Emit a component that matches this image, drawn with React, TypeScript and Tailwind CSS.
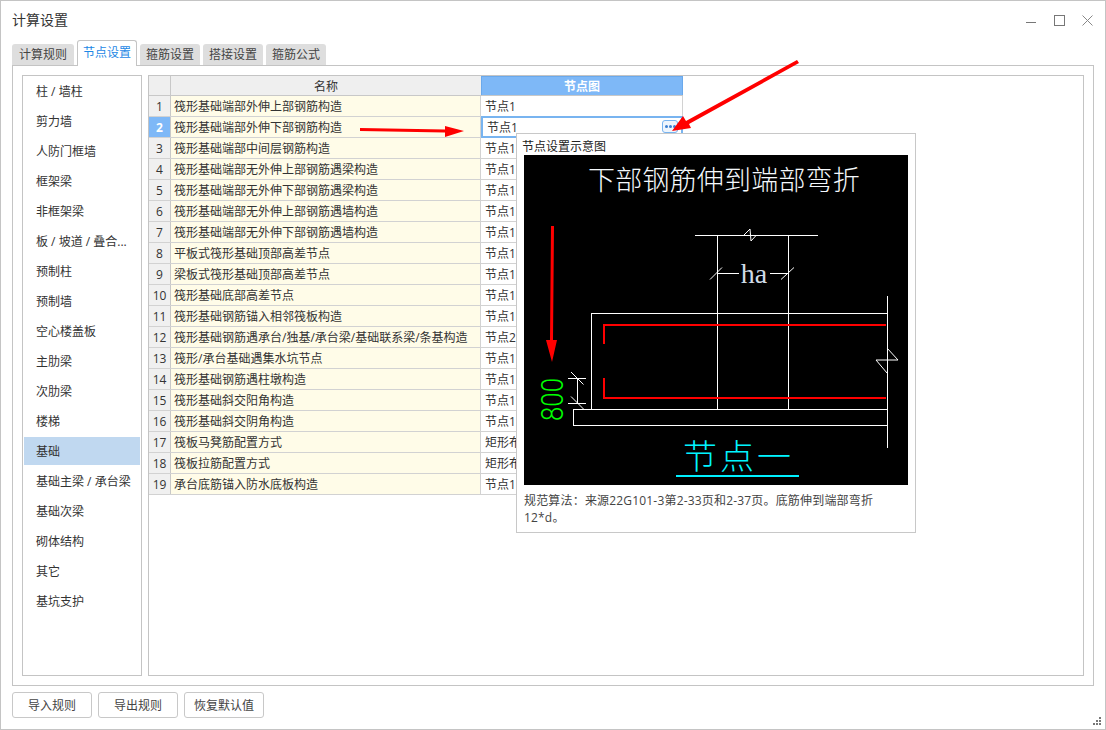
const font = { fontFamily: '"Open Sans", "Noto Sans CJK SC", "Liberation Sans", sans-serif' };

const tabs = ['计算规则', '节点设置', '箍筋设置', '搭接设置', '箍筋公式'];
const side = ['柱 / 墙柱', '剪力墙', '人防门框墙', '框架梁', '非框架梁', '板 / 坡道 / 叠合...', '预制柱', '预制墙', '空心楼盖板', '主肋梁', '次肋梁', '楼梯', '基础', '基础主梁 / 承台梁', '基础次梁', '砌体结构', '其它', '基坑支护'];
const rows: [string, string][] = [
  ['筏形基础端部外伸上部钢筋构造', '节点1'],
  ['筏形基础端部外伸下部钢筋构造', '节点1'],
  ['筏形基础端部中间层钢筋构造', '节点1'],
  ['筏形基础端部无外伸上部钢筋遇梁构造', '节点1'],
  ['筏形基础端部无外伸下部钢筋遇梁构造', '节点1'],
  ['筏形基础端部无外伸上部钢筋遇墙构造', '节点1'],
  ['筏形基础端部无外伸下部钢筋遇墙构造', '节点1'],
  ['平板式筏形基础顶部高差节点', '节点1'],
  ['梁板式筏形基础顶部高差节点', '节点1'],
  ['筏形基础底部高差节点', '节点1'],
  ['筏形基础钢筋锚入相邻筏板构造', '节点1'],
  ['筏形基础钢筋遇承台/独基/承台梁/基础联系梁/条基构造', '节点2'],
  ['筏形/承台基础遇集水坑节点', '节点1'],
  ['筏形基础钢筋遇柱墩构造', '节点1'],
  ['筏形基础斜交阳角构造', '节点1'],
  ['筏形基础斜交阴角构造', '节点1'],
  ['筏板马凳筋配置方式', '矩形布置'],
  ['筏板拉筋配置方式', '矩形布置'],
  ['承台底筋锚入防水底板构造', '节点1'],
];

function Diagram() {
  const w = '#ffffff';
  const r = '#ff0000';
  return (
    <svg width="384" height="330" viewBox="524 155 384 330" className="block bg-black" shapeRendering="crispEdges">
      <text x="724" y="190" textAnchor="middle" fill="#f4f8fc" fontSize="27" fontWeight="300" letterSpacing="0.2" style={{ fontFamily: '"Noto Sans CJK SC", serif' }} shapeRendering="auto">下部钢筋伸到端部弯折</text>
      <g stroke={w} strokeWidth="1" fill="none">
        <path d="M695 235.500H818M717 235V410M788 235V410" />
        <path d="M717 273.500H739M770 273.500H788" />
        <path d="M591.500 410V313.500H887.500M887 296V448M573.500 409.500H887.500M573.500 409V425.500H887.500" />
        <path d="M568 378.500H586M568 403.500H586M577.500 378V404" />
      </g>
      <g stroke={w} strokeWidth="1" fill="none" shapeRendering="auto">
        <path d="M744 235L750 229L751 241L756.500 235" />
        <path d="M710 279.500L722 267.500M781 279.500L794 267.500" />
        <path d="M887 348L898 360H876L887 373" />
        <path d="M571 372L583.500 384.500M571 396.500L583.500 409" />
      </g>
      <path d="M604 344V324.500H886M604 378V397.500H886" stroke={r} strokeWidth="2" fill="none" />
      <text x="0" y="0" transform="translate(563 421) rotate(-90)" fill="#00ff00" fontSize="31" fontWeight="300" style={{ fontFamily: 'Roboto, sans-serif' }} textLength="43" lengthAdjust="spacingAndGlyphs" shapeRendering="auto">800</text>
      <text x="754" y="283" textAnchor="middle" fill="#cfdbe6" fontSize="28" style={{ fontFamily: '"Liberation Serif", serif' }} shapeRendering="auto">ha</text>
      <text x="683" y="469" fill="#00f4ff" fontSize="34" fontWeight="300" style={{ fontFamily: '"Noto Sans CJK SC", serif' }} letterSpacing="3" shapeRendering="auto">节点一</text>
      <rect x="676" y="475" width="123" height="2" fill="#00f0ff" />
    </svg>
  );
}

function Arrows() {
  return (
    <svg className="absolute left-0 top-0 pointer-events-none" width="1106" height="730" viewBox="0 0 1106 730">
      <g fill="#ff0000" stroke="none">
        <path d="M360 128L445 129.500L445 126L464 131L445 137L445 132.500L360 131Z" />
        <path d="M797 60L799 63L689 124L691 128L672 131L683 116L686 121Z" />
        <path d="M551 226H554L553 340H557L552 362L546 340H550Z" />
      </g>
    </svg>
  );
}

export default function App() {
  return (
    <div className="relative w-[1106px] h-[730px] overflow-hidden bg-white border border-[#c4c4c4] text-[12px] text-[#333333] flex flex-col" style={font}>
      <div className="h-[39px] shrink-0 flex items-center justify-between pl-[11px] pr-[12px]">
        <span className="text-[14px] leading-none text-[#333333] -mt-[2px]">计算设置</span>
        <div className="flex items-center gap-[17px] -mt-[1px]">
          <svg width="11" height="11" viewBox="0 0 11 11" stroke="#777777" fill="none"><path d="M0 7.500H10" /></svg>
          <svg width="11" height="11" viewBox="0 0 11 11" stroke="#777777" fill="none"><rect x="0.500" y="0.500" width="10" height="10" /></svg>
          <svg width="11" height="11" viewBox="0 0 11 11" stroke="#888888" fill="none"><path d="M0.500 0.500L10.500 10.500M10.500 0.500L0.500 10.500" /></svg>
        </div>
      </div>

      <div className="h-[25px] shrink-0 flex items-end gap-[3px] pl-[11px] relative z-10">
        {tabs.map((t, i) =>
          i === 1 ? (
            <div key={t} className="h-[26px] w-[60px] -mb-[1px] pb-[2px] flex items-center justify-center bg-white border border-b-0 border-[#c4c4c4] rounded-t-[3px] text-[#1e88e5]">{t}</div>
          ) : (
            <div key={t} className={`h-[21px] ${i === 0 ? 'w-[62px]' : 'w-[60px]'} flex items-center justify-center bg-[#dedede] rounded-t-[3px] text-[#444444]`}>{t}</div>
          ),
        )}
      </div>

      <div className="mx-[11px] h-[621px] shrink-0 border border-[#c4c4c4] p-[9px] flex gap-[6px]">
        <div className="w-[120px] shrink-0 border border-[#c4c4c4] pt-[1px] px-[1px]">
          {side.map((s) => (
            <div key={s} className={`h-[28px] mb-[2px] pt-[2px] flex items-center pl-[12px] whitespace-nowrap ${s === '基础' ? 'bg-[#c0d8f0]' : ''}`}>{s}</div>
          ))}
        </div>
        <div className="flex-1 border border-[#c4c4c4]">
          <div className="flex h-[20px] w-[534px] border-b border-[#c8c8c8]">
            <div className="w-[22px] bg-[#efefef] border-r border-[#c8c8c8]" />
            <div className="w-[310px] bg-[#efefef] pt-[2px] flex items-center justify-center">名称</div>
            <div className="w-[202px] bg-[#7eb8f7] text-white font-bold pt-[1px] flex items-center justify-center border border-b-0 border-[#6aa9ec]">节点图</div>
          </div>
          {rows.map(([name, v], i) => (
            <div key={i} className="flex h-[21px] w-[534px] border-b border-[#d2d2d2]">
              <div className={`w-[22px] shrink-0 border-r border-[#c8c8c8] pt-[2px] flex items-center justify-center ${i === 1 ? 'bg-[#7eb8f7] text-white font-bold' : 'bg-[#f0f0f0]'}`}>{i + 1}</div>
              <div className="w-[310px] shrink-0 bg-[#fffce8] pl-[3px] pt-[2px] flex items-center whitespace-nowrap overflow-hidden border-r border-[#d2d2d2]">{name}</div>
              {i === 1 ? (
                <div className="w-[202px] shrink-0 -mt-[1px] h-[22px] border-2 border-[#78b4f0] flex items-center justify-between pl-[4px] pr-[3px] bg-white relative">
                  <span className="mt-[1px]">{v}</span>
                  <span className="w-[16px] h-[13px] rounded-[3px] border border-[#78b4f0] bg-[#eef5fd] flex items-center justify-center gap-[1px] mb-[1px]">
                    <i className="w-[3px] h-[3px] bg-[#3c7fd0] rounded-full" />
                    <i className="w-[3px] h-[3px] bg-[#3c7fd0] rounded-full" />
                    <i className="w-[3px] h-[3px] bg-[#3c7fd0] rounded-full" />
                  </span>
                </div>
              ) : (
                <div className="w-[202px] shrink-0 pl-[4px] pt-[2px] flex items-center whitespace-nowrap border-r border-[#d2d2d2]">{v}</div>
              )}
            </div>
          ))}
        </div>
      </div>

      <div className="flex gap-[6px] pl-[11px] pt-[6px]">
        {['导入规则', '导出规则', '恢复默认值'].map((b) => (
          <div key={b} className="h-[26px] w-[80px] border border-[#c8c8c8] rounded-[3px] pt-[2px] flex items-center justify-center text-[#444444]">{b}</div>
        ))}
      </div>

      <svg className="absolute right-[3px] bottom-[3px]" width="9" height="9" viewBox="0 0 9 9" fill="#777777">
        <rect x="6" y="0" width="2" height="2" /><rect x="3" y="3" width="2" height="2" /><rect x="6" y="3" width="2" height="2" />
        <rect x="0" y="6" width="2" height="2" /><rect x="3" y="6" width="2" height="2" /><rect x="6" y="6" width="2" height="2" />
      </svg>

      <div className="absolute left-[515px] top-[132px] w-[400px] h-[400px] bg-white border border-[#c8c8c8]">
        <div className="h-[21px] pl-[5px] pt-[4px] flex items-center text-[#222222] text-[12px]">节点设置示意图</div>
        <div className="ml-[7px]"><Diagram /></div>
        <div className="pl-[7px] pt-[7px] w-[372px] text-[12px] leading-[17px] tracking-[0.18px] text-[#444444]">规范算法：来源22G101-3第2-33页和2-37页。底筋伸到端部弯折12*d。</div>
      </div>

      <div className="absolute -left-px -top-px"><Arrows /></div>
    </div>
  );
}
